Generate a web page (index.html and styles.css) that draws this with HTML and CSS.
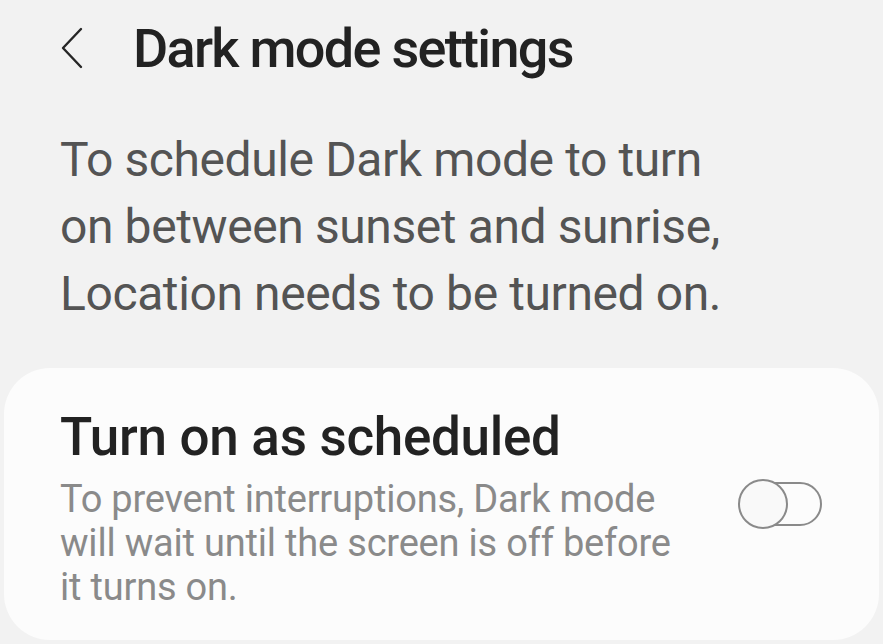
FILE: index.html
```html
<!DOCTYPE html>
<html>
<head>
<meta charset="utf-8">
<link rel="stylesheet" href="styles.css">
</head>
<body>
<header class="appbar">
  <svg class="back" width="24" height="42" viewBox="0 0 24 42"><path d="M21 2 L3 21 L21 40" fill="none" stroke="#262626" stroke-width="2.4" stroke-linecap="round" stroke-linejoin="round"/></svg>
  <h1 class="title">Dark mode settings</h1>
</header>
<p class="intro">To schedule Dark mode to turn on between sunset and sunrise, Location needs to be turned on.</p>
<section class="card">
  <div class="row">
    <div class="texts">
      <div class="row-title">Turn on as scheduled</div>
      <div class="row-sub">To prevent interruptions, Dark mode will wait until the screen is off before it turns on.</div>
    </div>
    <div class="switch"><span class="track"></span><span class="thumb"></span></div>
  </div>
</section>
</body>
</html>
```
FILE: styles.css
```css
html, body { margin: 0; padding: 0; }
body {
  background: #f2f2f2;
  font-family: Roboto, "Noto Sans", sans-serif;
  width: 883px;
  height: 644px;
  overflow: hidden;
}
.appbar {
  display: flex;
  align-items: center;
  height: 96px;
  padding-left: 60px;
}
.back { display: block; }
.title {
  margin: 0 0 0 49px;
  font-size: 54px;
  font-weight: 500;
  color: #222;
  letter-spacing: -1.7px;
}
.intro {
  margin: 30px 0 0 60px;
  width: 680px;
  font-size: 48px;
  line-height: 67px;
  color: #545454;
  letter-spacing: -0.4px;
}
.card {
  margin: 41px 4px 0 4px;
  background: #fcfcfc;
  border-radius: 46px;
  height: 272px;
  box-sizing: border-box;
  padding: 38px 0 0 56px;
}
.row { display: flex; align-items: center; }
.texts { width: 620px; }
.row-title {
  font-size: 53px;
  font-weight: 500;
  color: #222;
  line-height: 62px;
  letter-spacing: -0.3px;
}
.row-sub {
  font-size: 38px;
  line-height: 44px;
  color: #8a8a8a;
  margin-top: 9px;
  letter-spacing: -0.2px;
}
.switch {
  position: relative;
  width: 84px;
  height: 50px;
  margin-left: 58px;
  margin-bottom: 8px;
}
.track {
  position: absolute;
  left: 10px; top: 3px;
  width: 74px; height: 44px;
  box-sizing: border-box;
  border: 2px solid #8a8a8a;
  border-radius: 22px;
}
.thumb {
  position: absolute;
  left: 0; top: 0;
  width: 50px; height: 50px;
  box-sizing: border-box;
  border: 2px solid #8a8a8a;
  border-radius: 50%;
  background: #f9f9f9;
}
```
